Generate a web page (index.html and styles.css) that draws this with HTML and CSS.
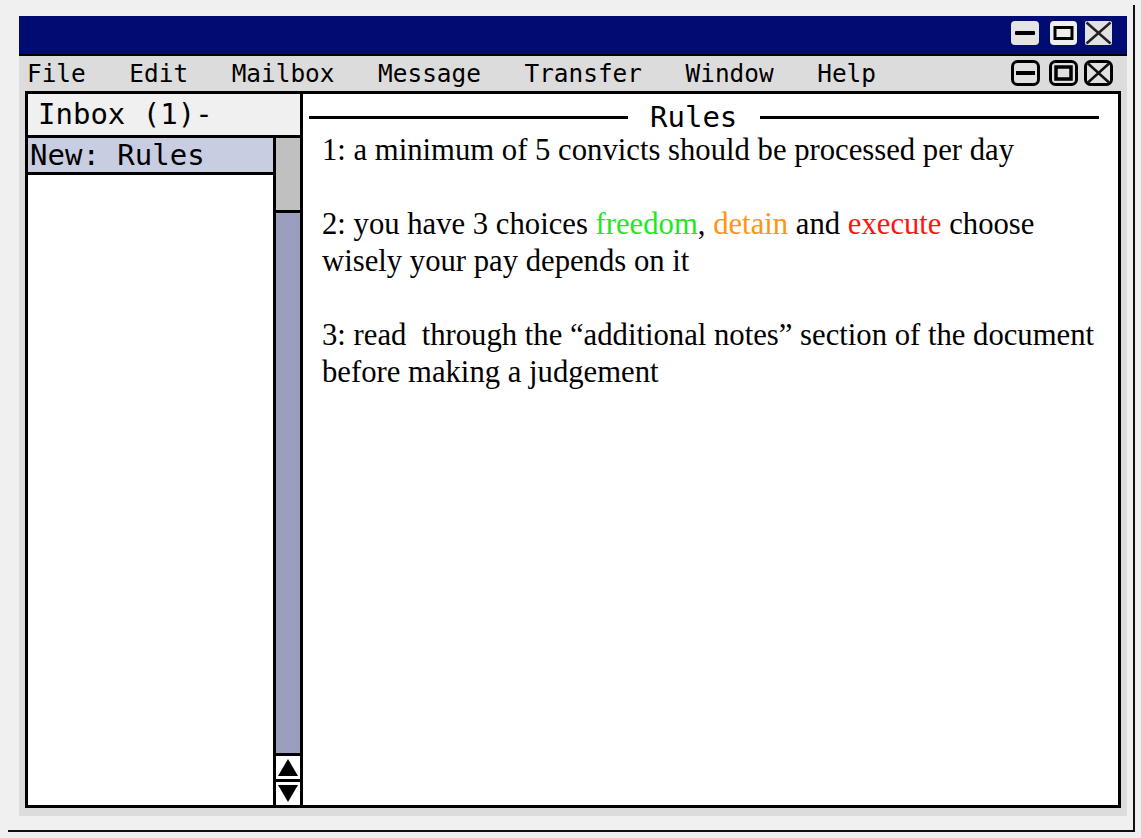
FILE: index.html
```html
<!DOCTYPE html>
<html>
<head>
<meta charset="utf-8">
<title>Rules</title>
<link rel="stylesheet" href="styles.css">
</head>
<body>
<div class="desk">
  <div class="window">
    <div class="titlebar">
      <svg class="tb-btn tb-min" width="28" height="24" viewBox="0 0 28 24"><rect x="0" y="0" width="28" height="24" rx="4" fill="#e4e4e4"/><rect x="4" y="10" width="20" height="4" rx="1" fill="#000"/></svg>
      <svg class="tb-btn tb-max" width="27" height="24" viewBox="0 0 27 24"><rect x="0" y="0" width="27" height="24" rx="4" fill="#eeeeee"/><rect x="5" y="6.5" width="17" height="11" fill="none" stroke="#000" stroke-width="3"/></svg>
      <svg class="tb-btn tb-close" width="27" height="24" viewBox="0 0 27 24"><rect x="0" y="0" width="27" height="24" rx="2" fill="#e2e2e2"/><path d="M1.5 1.5 L25.5 22.5 M25.5 1.5 L1.5 22.5" stroke="#222" stroke-width="2.5" fill="none"/></svg>
    </div>
    <div class="menubar">
      <nav class="menu">
        <span>File</span><span>Edit</span><span>Mailbox</span><span>Message</span><span>Transfer</span><span>Window</span><span>Help</span>
      </nav>
      <div class="mb-buttons">
        <svg class="mb-btn mb-min" width="29" height="26" viewBox="0 0 29 26"><rect x="1.5" y="1.5" width="26" height="23" rx="5" fill="#e0e0e0" stroke="#000" stroke-width="3"/><rect x="5" y="11" width="19" height="4" fill="#000"/></svg>
        <svg class="mb-btn mb-max" width="29" height="26" viewBox="0 0 29 26"><rect x="1.5" y="1.5" width="26" height="23" rx="5" fill="#e0e0e0" stroke="#000" stroke-width="3"/><rect x="7" y="7" width="15" height="12" fill="none" stroke="#000" stroke-width="3.5"/></svg>
        <svg class="mb-btn mb-close" width="29" height="26" viewBox="0 0 29 26"><rect x="1.5" y="1.5" width="26" height="23" rx="5" fill="#e0e0e0" stroke="#000" stroke-width="3"/><path d="M4 3.5 L25 22.5 M25 3.5 L4 22.5" stroke="#111" stroke-width="2.5" fill="none"/></svg>
      </div>
    </div>
    <div class="content">
      <aside class="mailbox">
        <div class="mb-header">Inbox (1)-</div>
        <div class="mb-body">
          <ul class="msg-list">
            <li class="msg selected">New: Rules</li>
          </ul>
          <div class="scrollbar">
            <div class="thumb"></div>
            <div class="track"></div>
            <div class="arrow">
              <svg width="22" height="19" viewBox="0 0 22 19"><polygon points="11,1 21,18 1,18" fill="#000"/></svg>
            </div>
            <div class="arrow">
              <svg width="22" height="19" viewBox="0 0 22 19"><polygon points="1,1 21,1 11,18" fill="#000"/></svg>
            </div>
          </div>
        </div>
      </aside>
      <main class="reader">
        <div class="reader-title">
          <span class="rule-line rule-left"></span>
          <h1>Rules</h1>
          <span class="rule-line rule-right"></span>
        </div>
        <div class="reader-body">
          <p>1: a minimum of 5 convicts should be processed per day</p>
          <p>2: you have 3 choices <span class="c-free">freedom</span>, <span class="c-detain">detain</span> and <span class="c-exec">execute</span> choose wisely your pay depends on it</p>
          <p>3: read&nbsp; through the “additional notes” section of the document before making a judgement</p>
        </div>
      </main>
    </div>
  </div>
</div>
</body>
</html>
```
FILE: styles.css
```css
html, body {
  margin: 0;
  padding: 0;
  background: #f0f0f0;
}

.desk {
  box-sizing: border-box;
  margin: 5px 0 0 8px;
  width: 1127px;
  height: 827px;
  padding: 11px 6px 14px 11px;
  border-right: 2px solid #111;
  border-bottom: 2px solid #111;
  background: #f0f0f0;
}

.window {
  display: flex;
  flex-direction: column;
  height: 100%;
  background: #dcdcdc;
}

.titlebar {
  box-sizing: border-box;
  height: 40px;
  flex: none;
  background: #000c72;
  border-bottom: 2px solid #000;
  display: flex;
  justify-content: flex-end;
  align-items: flex-start;
  padding: 5px 15px 0 0;
}

.tb-btn { display: block; }
.tb-max { margin-left: 11px; }
.tb-close { margin-left: 8px; }

.menubar {
  box-sizing: border-box;
  height: 34px;
  flex: none;
  display: flex;
  align-items: center;
  justify-content: space-between;
  padding: 0 14px 0 8px;
}

.menu {
  display: flex;
  gap: 43.6px;
  font-family: "DejaVu Sans Mono", monospace;
  font-size: 24.4px;
  color: #000;
}

.mb-buttons {
  display: flex;
  align-items: center;
}

.mb-btn { display: block; }
.mb-max { margin-left: 9px; }
.mb-close { margin-left: 6px; }

.content {
  flex: 1;
  min-height: 0;
  margin: 1px 6px 8px;
  border: 3px solid #000;
  display: flex;
  background: #fff;
}

.mailbox {
  width: 272px;
  flex: none;
  border-right: 3px solid #000;
  display: flex;
  flex-direction: column;
}

.mb-header {
  height: 41px;
  flex: none;
  background: #f0f0f0;
  border-bottom: 3px solid #000;
  padding-left: 10px;
  font-family: "DejaVu Sans Mono", monospace;
  font-size: 29px;
  line-height: 41px;
  color: #000;
}

.mb-body {
  flex: 1;
  display: flex;
  min-height: 0;
}

.msg-list {
  flex: 1;
  margin: 0;
  padding: 0;
  list-style: none;
}

.msg {
  height: 34px;
  padding-left: 2px;
  border-bottom: 3px solid #000;
  font-family: "DejaVu Sans Mono", monospace;
  font-size: 29px;
  line-height: 34px;
  color: #000;
}

.msg.selected { background: #c8cde1; }

.scrollbar {
  width: 24px;
  flex: none;
  border-left: 3px solid #000;
  display: flex;
  flex-direction: column;
}

.thumb {
  height: 72px;
  flex: none;
  background: #c0c0c0;
  border-bottom: 3px solid #000;
}

.track {
  flex: 1;
  background: #9c9ebd;
}

.arrow {
  height: 23px;
  flex: none;
  border-top: 3px solid #000;
  background: #fff;
  display: flex;
  align-items: center;
  justify-content: center;
}

.arrow svg { display: block; }

.reader {
  flex: 1;
  min-width: 0;
}

.reader-title {
  display: flex;
  align-items: center;
  height: 30px;
  margin-top: 8px;
  padding: 0 19px 0 6px;
}

.rule-line {
  height: 3px;
  background: #000;
}

.rule-left { width: 319px; flex: none; }
.rule-right { flex: 1; }

.reader-title h1 {
  margin: 0 23px 0 22px;
  font-family: "DejaVu Sans Mono", monospace;
  font-weight: normal;
  font-size: 29px;
  line-height: 1;
  color: #000;
}

.reader-body {
  padding: 0 10px 0 19px;
  font-family: "Liberation Serif", "Times New Roman", serif;
  font-size: 30.7px;
  line-height: 37px;
  color: #000;
}

.reader-body p { margin: 0 0 37px; }

.c-free { color: #1ee81e; }
.c-detain { color: #ff9513; }
.c-exec { color: #ff1212; }
```
